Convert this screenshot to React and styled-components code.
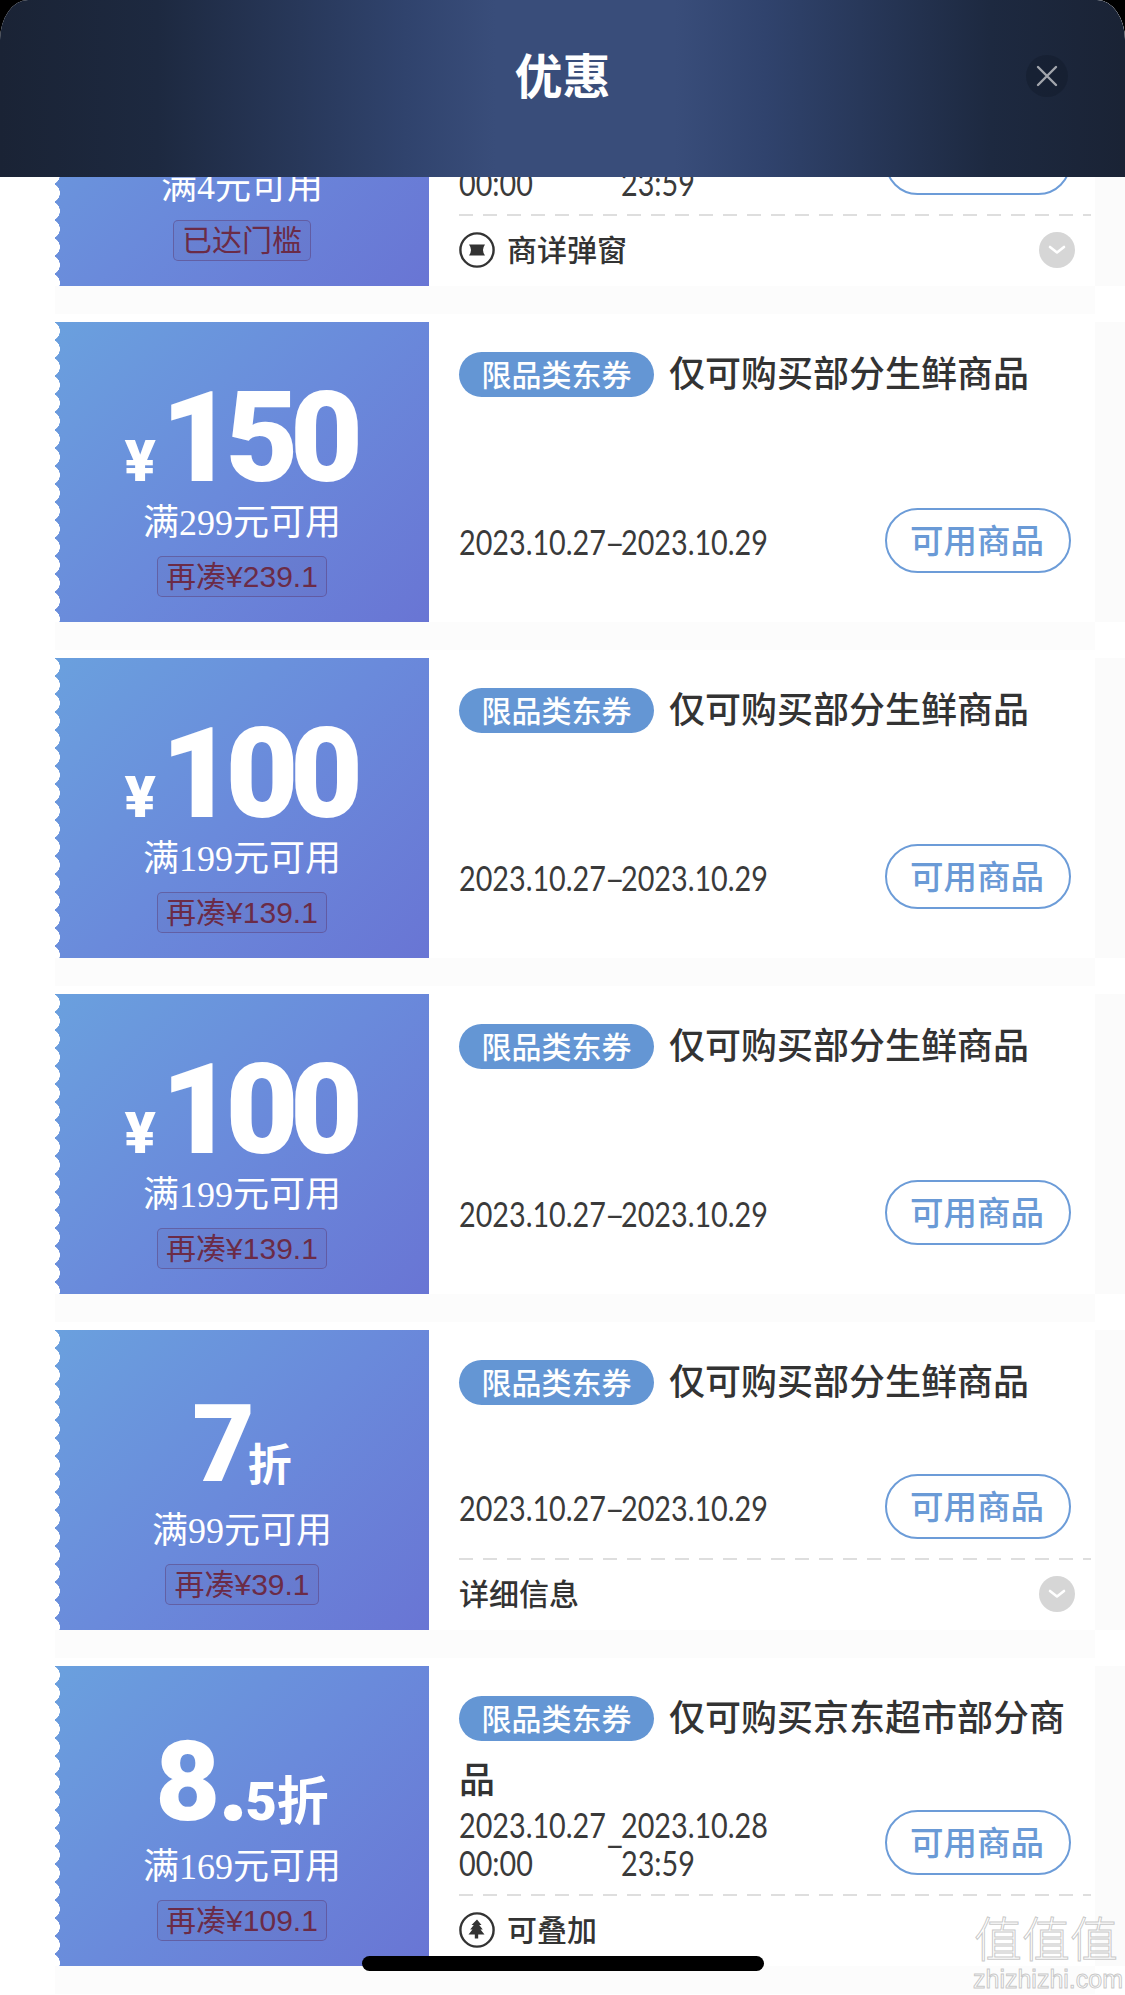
import React from "react";
import styled, { createGlobalStyle } from "styled-components";

const CJK = '"Noto Sans CJK SC", "Noto Sans", sans-serif';

const Global = createGlobalStyle`
  html, body { margin: 0; padding: 0; background: #000; }
  * { box-sizing: border-box; }
`;

const Sheet = styled.div`
  position: relative;
  width: 1125px;
  height: 1995px;
  overflow: hidden;
  background: #fff;
  border-radius: 28px 28px 0 0 / 40px 40px 0 0;
  font-family: ${CJK};
`;

const Header = styled.header`
  position: relative;
  z-index: 2;
  height: 177px;
  padding-top: 43px;
  display: grid;
  grid-template-columns: 1fr auto 1fr;
  align-items: start;
  background: linear-gradient(90deg, #1a2335 0%, #1d2940 14%, #30436d 36%, #394d7a 44%, #394d7a 60%, #30436d 68%, #1d2940 88%, #1a2335 100%);
`;

const HeaderTitle = styled.h1`
  grid-column: 2;
  margin: 0;
  font-size: 48px;
  line-height: 60px;
  font-weight: 700;
  color: #fff;
`;

const CloseButton = styled.button`
  grid-column: 3;
  justify-self: end;
  width: 42px;
  height: 42px;
  margin: 12px 57px 0 0;
  padding: 0;
  border: 0;
  border-radius: 50%;
  background: rgba(18, 26, 42, 0.45);
  display: flex;
  align-items: center;
  justify-content: center;
`;

const List = styled.main`
  margin-top: -191px;
  display: flex;
  flex-direction: column;
  gap: 36px;
`;

const Card = styled.article`
  width: 1040px;
  height: 300px;
  margin-left: 55px;
  display: flex;
  background: #fff;
  box-shadow: 0 28px 0 #fcfcfc, 31px 0 0 #fbfbfb;
`;

const Stub = styled.div`
  position: relative;
  flex: none;
  width: 374px;
  height: 300px;
  display: flex;
  flex-direction: column;
  align-items: center;
  color: #fff;
  background: linear-gradient(135deg, #6aa0de 0%, #6a8adb 50%, #6975d4 100%);

  &::before {
    content: "";
    position: absolute;
    left: 0;
    top: 0;
    bottom: 0;
    width: 7px;
    background: radial-gradient(circle 10px at -5px 9px, #fff 96%, transparent 100%) 0 0 / 7px 18px repeat-y;
  }
`;

const AmountRow = styled.div`
  height: 181px;
  padding-top: ${(p) => p.$top}px;
  margin-right: ${(p) => p.$shift || 0}px;
  display: flex;
  align-items: baseline;
  justify-content: center;
  font-family: Roboto, "Liberation Sans", sans-serif;
  line-height: 1;
  font-weight: 900;
`;

const Yen = styled.span`
  font-size: 58px;
  margin-right: 5px;
`;

const Big = styled.span`
  font-size: ${(p) => p.$size}px;
  letter-spacing: ${(p) => p.$spacing}px;
`;

const Dot = styled.span`
  font-size: 100px;
  margin: 0 -3px 0 -2px;
`;

const Five = styled.span`
  font-size: 54px;
  letter-spacing: -2px;
`;

const Zhe = styled.span`
  font-family: ${CJK};
  font-weight: 700;
  font-size: ${(p) => p.$size}px;
  margin-left: ${(p) => p.$gap}px;
`;

const Threshold = styled.div`
  height: 40px;
  font-family: "Liberation Serif", ${CJK};
  font-size: 36px;
  line-height: 40px;
  font-weight: 400;
  color: #fff;
  white-space: nowrap;
`;

const Tag = styled.div`
  height: 41px;
  margin-top: 13px;
  padding: 0 8px;
  display: flex;
  align-items: center;
  font-family: "Liberation Sans", ${CJK};
  font-size: 30px;
  line-height: 1;
  color: #6b2b47;
  background: rgba(90, 90, 160, 0.12);
  border: 1px solid rgba(90, 50, 100, 0.42);
  border-radius: 5px;
  white-space: nowrap;
`;

const Detail = styled.div`
  flex: 1;
  min-width: 0;
  padding-left: 30px;
  display: flex;
  flex-direction: column;
`;

const Main = styled.div`
  flex: 1;
  min-height: 0;
  padding-top: 18px;
  display: flex;
  flex-direction: column;
`;

const Title = styled.div`
  font-size: 36px;
  line-height: 62px;
  font-weight: 500;
  color: #333;
`;

const Pill = styled.span`
  display: inline-block;
  width: 195px;
  height: 45px;
  margin: 12px 15px 0 0;
  vertical-align: top;
  border-radius: 23px;
  background: #6496d4;
  color: #fff;
  font-size: 30px;
  line-height: 42px;
  font-weight: 500;
  text-align: center;
`;

const InfoRow = styled.div`
  flex: none;
  height: 65px;
  margin-top: auto;
  margin-bottom: ${(p) => p.$bottom}px;
  padding-right: 24px;
  display: flex;
  align-items: center;
  justify-content: space-between;
`;

const DateGroup = styled.div`
  flex: none;
  display: flex;
  align-items: center;
  padding-top: 3px;
  font-family: Lato, sans-serif;
  font-size: 34px;
  line-height: 38px;
  color: #3a3a3a;
`;

const DateCell = styled.div`
  width: 146px;
  white-space: nowrap;
  transform: scaleX(0.845);
  transform-origin: left center;
`;

const DateDash = styled.span`
  width: 16px;
  text-align: center;
`;

const GoodsButton = styled.button`
  width: 186px;
  height: 65px;
  padding: 0 2px 4px 0;
  background: #fff;
  border: 2px solid #6c9cd8;
  border-radius: 33px;
  color: #6a9ad6;
  font-family: ${CJK};
  font-size: 33.5px;
  font-weight: 500;
  line-height: 1;
`;

const Footer = styled.div`
  flex: none;
  height: 72px;
  margin-right: 4px;
  padding-right: 16px;
  display: flex;
  align-items: center;
  gap: 12px;
  background: repeating-linear-gradient(90deg, #dedede 0 14px, transparent 14px 24px) top / 100% 2px no-repeat;
`;

const FooterText = styled.span`
  flex: 1;
  margin-top: -4px;
  font-size: 30px;
  font-weight: 500;
  color: #333;
`;

const Chevron = styled.span`
  width: 36px;
  height: 36px;
  border-radius: 50%;
  background: #d6d6d6;
  display: flex;
  align-items: center;
  justify-content: center;
`;

const HomeBar = styled.div`
  position: absolute;
  left: 362px;
  top: 1956px;
  width: 402px;
  height: 15px;
  border-radius: 8px;
  background: #000;
`;

const Watermark = styled.div`
  position: absolute;
  left: 973px;
  top: 1906px;
  width: 146px;
  text-align: center;
  color: rgba(255, 255, 255, 0.75);
  -webkit-text-stroke: 1px rgba(170, 170, 170, 0.65);
  font-family: "Liberation Sans", ${CJK};

  &::before {
    content: "";
    position: absolute;
    left: 68px;
    top: 2px;
    width: 32px;
    height: 32px;
    border-radius: 50%;
    background: rgba(190, 190, 190, 0.35);
    z-index: -1;
  }
`;

const WatermarkGlyphs = styled.div`
  font-family: ${CJK};
  font-size: 48px;
  line-height: 60px;
  font-weight: 300;
  white-space: nowrap;
`;

const WatermarkUrl = styled.div`
  font-size: 25px;
  line-height: 26px;
  white-space: nowrap;
`;

const TicketIcon = () => (
  <svg width="36" height="36" viewBox="0 0 36 36" fill="none">
    <circle cx="18" cy="18" r="16.6" stroke="#333" strokeWidth="2.4" />
    <path d="M10 12.500h16q-4 5.500 0 11H10q4-5.500 0-11z" fill="#333" />
  </svg>
);

const TreeIcon = () => (
  <svg width="36" height="36" viewBox="0 0 36 36" fill="none">
    <circle cx="18" cy="18" r="16.6" stroke="#333" strokeWidth="2.4" />
    <path d="M18 7.500l4.500 5.500h-2.300l3.600 4.500h-2.300l4 5h-6.300v4h-3.400v-4H9.500l4-5h-2.300l3.600-4.500h-2.300z" fill="#333" />
  </svg>
);

const ChevronIcon = () => (
  <svg width="20" height="12" viewBox="0 0 20 12" fill="none">
    <path d="M3 3l7 5.500L17 3" stroke="#fff" strokeWidth="2.600" strokeLinecap="round" strokeLinejoin="round" />
  </svg>
);

const CouponDates = ({ from, to, fromTime, toTime }) => (
  <DateGroup>
    <DateCell>
      {from}
      {fromTime && <br />}
      {fromTime}
    </DateCell>
    <DateDash>–</DateDash>
    <DateCell>
      {to}
      {toTime && <br />}
      {toTime}
    </DateCell>
  </DateGroup>
);

const Cash = ({ value }) => (
  <AmountRow $top={53} $shift={5}>
    <Yen>¥</Yen>
    <Big $size={126} $spacing={-8.5}>{value}</Big>
  </AmountRow>
);

const coupons = [
  {
    amount: <AmountRow $top={53} />,
    threshold: "满4元可用",
    tag: "已达门槛",
    dates: { from: "2023.10.27", fromTime: "00:00", to: "2023.10.28", toTime: "23:59" },
    footer: { icon: <TicketIcon />, text: "商详弹窗", chevron: true },
    covered: true,
  },
  { amount: <Cash value="150" />, threshold: "满299元可用", tag: "再凑¥239.1" },
  { amount: <Cash value="100" />, threshold: "满199元可用", tag: "再凑¥139.1" },
  { amount: <Cash value="100" />, threshold: "满199元可用", tag: "再凑¥139.1" },
  {
    amount: (
      <AmountRow $top={60}>
        <Big $size={108} $spacing={-7}>7</Big>
        <Zhe $size={44} $gap={0}>折</Zhe>
      </AmountRow>
    ),
    threshold: "满99元可用",
    tag: "再凑¥39.1",
    footer: { text: "详细信息", chevron: true },
  },
  {
    amount: (
      <AmountRow $top={60}>
        <Big $size={112} $spacing={0}>8</Big>
        <Dot>.</Dot>
        <Five>5</Five>
        <Zhe $size={52} $gap={2}>折</Zhe>
      </AmountRow>
    ),
    threshold: "满169元可用",
    tag: "再凑¥109.1",
    name: "仅可购买京东超市部分商品",
    dates: { from: "2023.10.27", fromTime: "00:00", to: "2023.10.28", toTime: "23:59" },
    footer: { icon: <TreeIcon />, text: "可叠加" },
  },
];

const defaultDates = { from: "2023.10.27", to: "2023.10.29" };

export default function App() {
  return (
    <Sheet>
      <Global />
      <Header>
        <HeaderTitle>优惠</HeaderTitle>
        <CloseButton aria-label="关闭">
          <svg width="22" height="22" viewBox="0 0 22 22" fill="none">
            <path d="M2 2l18 18M20 2L2 20" stroke="#a3a6ad" strokeWidth="2.400" strokeLinecap="round" />
          </svg>
        </CloseButton>
      </Header>
      <List>
        {coupons.map((c, i) => (
          <Card key={i}>
            <Stub>
              {c.amount}
              <Threshold>{c.threshold}</Threshold>
              <Tag>{c.tag}</Tag>
            </Stub>
            <Detail>
              <Main>
                {!c.covered && (
                  <Title>
                    <Pill>限品类东券</Pill>
                    {c.name || "仅可购买部分生鲜商品"}
                  </Title>
                )}
                <InfoRow $bottom={c.footer ? 19 : 49}>
                  <CouponDates {...(c.dates || defaultDates)} />
                  <GoodsButton>{!c.covered && "可用商品"}</GoodsButton>
                </InfoRow>
              </Main>
              {c.footer && (
                <Footer>
                  {c.footer.icon}
                  <FooterText>{c.footer.text}</FooterText>
                  {c.footer.chevron && (
                    <Chevron>
                      <ChevronIcon />
                    </Chevron>
                  )}
                </Footer>
              )}
            </Detail>
          </Card>
        ))}
      </List>
      <Watermark>
        <WatermarkGlyphs>值值值</WatermarkGlyphs>
        <WatermarkUrl>zhizhizhi.com</WatermarkUrl>
      </Watermark>
      <HomeBar />
    </Sheet>
  );
}
